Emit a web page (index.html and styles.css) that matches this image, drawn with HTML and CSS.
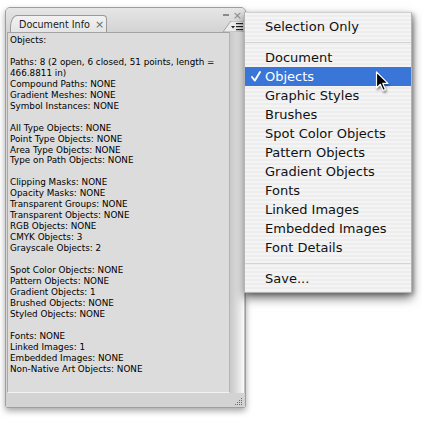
FILE: index.html
```html
<!DOCTYPE html>
<html>
<head>
<meta charset="utf-8">
<link rel="stylesheet" href="styles.css">
</head>
<body>
<div class="stage">
  <div class="panel">
    <div class="panel-head">
      <div class="tab"><span class="tab-title">Document Info</span><span class="tab-close">×</span></div>
      <div class="head-right">
        <div class="win-ctrls"><span class="min"></span><span class="close">×</span></div>
        <div class="flyout">
          <svg width="22" height="11" viewBox="0 0 22 11">
            <path d="M0 11 L7 1 Q8 0 9 0 L22 0 L22 11 Z" fill="#ececec" stroke="#a4a4a4" stroke-width="1"/>
            <path d="M8 5 L12 5 L10 7.5 Z" fill="#222"/>
            <rect x="13" y="2" width="7" height="1.2" fill="#222"/>
            <rect x="13" y="5" width="7" height="1.2" fill="#222"/>
            <rect x="13" y="8" width="7" height="1.2" fill="#222"/>
          </svg>
        </div>
      </div>
    </div>
    <div class="panel-body">
      <div class="info">
        <p>Objects:</p>
        <p>Paths: 8 (2 open, 6 closed, 51 points, length =<br>466.8811 in)<br>Compound Paths: NONE<br>Gradient Meshes: NONE<br>Symbol Instances: NONE</p>
        <p>All Type Objects: NONE<br>Point Type Objects: NONE<br>Area Type Objects: NONE<br>Type on Path Objects: NONE</p>
        <p>Clipping Masks: NONE<br>Opacity Masks: NONE<br>Transparent Groups: NONE<br>Transparent Objects: NONE<br>RGB Objects: NONE<br>CMYK Objects: 3<br>Grayscale Objects: 2</p>
        <p>Spot Color Objects: NONE<br>Pattern Objects: NONE<br>Gradient Objects: 1<br>Brushed Objects: NONE<br>Styled Objects: NONE</p>
        <p>Fonts: NONE<br>Linked Images: 1<br>Embedded Images: NONE<br>Non-Native Art Objects: NONE</p>
      </div>
      <div class="scroll"></div>
    </div>
    <div class="panel-foot">
      <svg class="grip" width="11" height="9" viewBox="0 0 11 9">
        <g fill="#6a6a6a">
          <rect x="9" y="1" width="1" height="1"/>
          <rect x="7" y="3" width="1" height="1"/><rect x="9" y="3" width="1" height="1"/>
          <rect x="5" y="5" width="1" height="1"/><rect x="7" y="5" width="1" height="1"/><rect x="9" y="5" width="1" height="1"/>
          <rect x="3" y="7" width="1" height="1"/><rect x="5" y="7" width="1" height="1"/><rect x="7" y="7" width="1" height="1"/><rect x="9" y="7" width="1" height="1"/>
        </g>
      </svg>
    </div>
  </div>

  <div class="menu">
    <div class="item"><span class="check"></span>Selection Only</div>
    <div class="sep"></div>
    <div class="item"><span class="check"></span>Document</div>
    <div class="item selected"><span class="check"><svg width="10" height="11" viewBox="0 0 10 11"><path d="M1 6 L3.9 9.6 L9 1" fill="none" stroke="#fff" stroke-width="1.9" stroke-linecap="round" stroke-linejoin="round"/></svg></span>Objects</div>
    <div class="item"><span class="check"></span>Graphic Styles</div>
    <div class="item"><span class="check"></span>Brushes</div>
    <div class="item"><span class="check"></span>Spot Color Objects</div>
    <div class="item"><span class="check"></span>Pattern Objects</div>
    <div class="item"><span class="check"></span>Gradient Objects</div>
    <div class="item"><span class="check"></span>Fonts</div>
    <div class="item"><span class="check"></span>Linked Images</div>
    <div class="item"><span class="check"></span>Embedded Images</div>
    <div class="item"><span class="check"></span>Font Details</div>
    <div class="sep"></div>
    <div class="item"><span class="check"></span>Save...</div>
  </div>

  <svg class="cursor" width="14" height="22" viewBox="0 0 14 22">
    <path d="M1.5 1 L1.5 17 L5.3 13.3 L8 19.6 L10.4 18.6 L7.8 12.4 L13 12.4 Z" fill="#000" stroke="#fff" stroke-width="1.2" stroke-linejoin="round"/>
  </svg>
</div>
</body>
</html>
```

FILE: styles.css
```css
* { box-sizing: border-box; }
html, body { margin: 0; padding: 0; background: #fff; }
body {
  width: 422px;
  height: 422px;
  overflow: hidden;
  font-family: "DejaVu Sans", "Noto Sans", sans-serif;
}
.stage {
  position: relative;
  width: 422px;
  height: 422px;
  padding: 7px 0 0 5px;
}

/* ---------- panel ---------- */
.panel {
  width: 241px;
  height: 401px;
  border: 1px solid #9e9e9e;
  border-radius: 5px 5px 3px 3px;
  background: #d5d5d5;
  box-shadow: 0 3px 6px rgba(0, 0, 0, 0.35);
  display: flex;
  flex-direction: column;
}
.panel-head {
  height: 24px;
  flex: none;
  display: flex;
  align-items: flex-end;
  padding-left: 4px;
  background: linear-gradient(#e6e6e6, #d3d3d3);
  border-radius: 4px 4px 0 0;
}
.tab {
  height: 17px;
  width: 97px;
  display: flex;
  align-items: center;
  gap: 5px;
  padding: 1px 0 0 8px;
  background: linear-gradient(#f2f2f2, #e4e4e4);
  border: 1px solid #9a9a9a;
  border-bottom: none;
  border-radius: 7px 4px 0 0 / 12px 4px 0 0;
  font-size: 9.6px;
  color: #1a1a1a;
}
.tab-close {
  font-size: 11px;
  color: #6a6a6a;
  line-height: 1;
}
.head-right {
  margin-left: auto;
  width: 22px;
  height: 24px;
  display: flex;
  flex-direction: column;
}
.win-ctrls {
  height: 13px;
  display: flex;
  align-items: center;
  justify-content: flex-end;
  gap: 4px;
  padding: 1px 3px 0 0;
  color: #8a8a8a;
}
.win-ctrls .min {
  width: 6px;
  height: 1.5px;
  background: #8a8a8a;
}
.win-ctrls .close {
  font-size: 11px;
  line-height: 1;
}
.flyout {
  height: 11px;
  display: flex;
}
.flyout svg { display: block; }

.panel-body {
  flex: 1;
  display: flex;
  min-height: 0;
}
.info {
  width: 223px;
  margin-left: 1px;
  padding: 2px 2px;
  background: #dcdcdc;
  border-top: 1px solid #a2a2a2;
  border-left: 1px solid #a8a8a8;
  border-right: 1px solid #b4b4b4;
  border-bottom: 1px solid #f2f2f2;
  font-size: 8.8px;
  line-height: 10.95px;
  color: #000;
  white-space: nowrap;
  overflow: hidden;
}
.info p { margin: 0 0 10.95px; }
.scroll {
  flex: 1;
  background: linear-gradient(to right, #c9c9c9 0%, #d2d2d2 25%, #e6e6e6 65%, #fafafa 100%);
  border-right: 1px solid #c0c0c0;
}
.panel-foot {
  height: 14px;
  flex: none;
  display: flex;
  justify-content: flex-end;
  align-items: flex-end;
  padding: 0 2px 1px 0;
  background: #d3d3d3;
}
.grip { display: block; }

/* ---------- popup menu ---------- */
.menu {
  position: absolute;
  left: 244px;
  top: 12px;
  width: 168px;
  padding: 4px 0;
  background: repeating-linear-gradient(to bottom, #f4f4f4 0 2px, #ededed 2px 4px);
  border: 1px solid #b4b4b4;
  border-top-color: #d0d0d0;
  box-shadow: 0 5px 10px rgba(0, 0, 0, 0.55), 2px 2px 4px rgba(0, 0, 0, 0.25);
  font-size: 13px;
  color: #111;
}
.item {
  height: 19px;
  line-height: 19px;
  display: flex;
  white-space: nowrap;
}
.item .check {
  width: 20px;
  flex: none;
  padding-left: 6px;
  display: flex;
  align-items: center;
}
.item .check svg { display: block; }
.item.selected {
  background: #3a76d8;
  color: #fff;
}
.sep {
  height: 12px;
  display: flex;
  align-items: center;
}
.sep::before {
  content: "";
  flex: 1;
  height: 1px;
  background: #d4d4d4;
}

.cursor {
  position: absolute;
  left: 375px;
  top: 71px;
  filter: drop-shadow(1px 2px 1px rgba(0, 0, 0, 0.4));
}
```
